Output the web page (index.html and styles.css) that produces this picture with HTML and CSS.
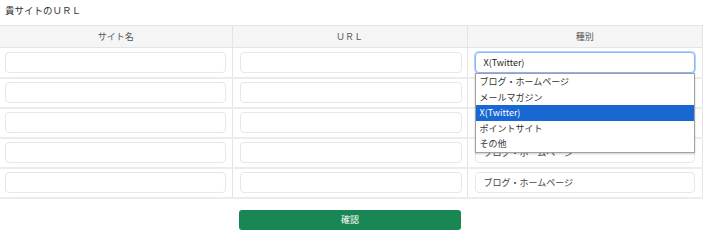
FILE: index.html
```html
<!DOCTYPE html>
<html lang="ja">
<head>
    <meta charset="UTF-8">
    <meta name="viewport" content="width=device-width, initial-scale=1.0">
    <title>貴サイトのＵＲＬ</title>
    <link rel="stylesheet" href="styles.css">
</head>
<body>
    <div class="container">
        <h2 class="title">貴サイトのＵＲＬ</h2>

        <table class="url-table">
            <colgroup>
                <col class="col-name">
                <col class="col-url">
                <col class="col-type">
            </colgroup>
            <thead>
                <tr>
                    <th>サイト名</th>
                    <th>ＵＲＬ</th>
                    <th>種別</th>
                </tr>
            </thead>
            <tbody>
                <tr>
                    <td><input type="text" class="field"></td>
                    <td><input type="text" class="field"></td>
                    <td class="type-cell">
                        <div class="field select focus">X(Twitter)</div>
                        <ul class="dropdown">
                            <li>ブログ・ホームページ</li>
                            <li>メールマガジン</li>
                            <li class="active">X(Twitter)</li>
                            <li>ポイントサイト</li>
                            <li>その他</li>
                        </ul>
                    </td>
                </tr>
                <tr>
                    <td><input type="text" class="field"></td>
                    <td><input type="text" class="field"></td>
                    <td><div class="field select">ブログ・ホームページ</div></td>
                </tr>
                <tr>
                    <td><input type="text" class="field"></td>
                    <td><input type="text" class="field"></td>
                    <td><div class="field select">ブログ・ホームページ</div></td>
                </tr>
                <tr>
                    <td><input type="text" class="field"></td>
                    <td><input type="text" class="field"></td>
                    <td><div class="field select">ブログ・ホームページ</div></td>
                </tr>
                <tr>
                    <td><input type="text" class="field"></td>
                    <td><input type="text" class="field"></td>
                    <td><div class="field select">ブログ・ホームページ</div></td>
                </tr>
            </tbody>
        </table>

        <div class="actions">
            <button type="button" class="btn">確認</button>
        </div>
    </div>
</body>
</html>
```

FILE: styles.css
```css
body {
    margin: 0;
    font-family: "Noto Sans CJK JP", "Noto Sans", sans-serif;
    font-size: 9px;
    color: #333;
    background: white;
}

.container {
    width: 703px;
}

.title {
    margin: 0;
    padding: 3px 5px 0;
    height: 25px;
    font-size: 9.5px;
    font-weight: normal;
    color: #333;
    box-sizing: border-box;
}

.url-table {
    width: 703px;
    border-collapse: collapse;
    table-layout: fixed;
    border-top: 1px solid #e2e4e7;
    border-bottom: 1px solid #e2e4e7;
}

.col-name {
    width: 232px;
}

.col-url {
    width: 235px;
}

.url-table th,
.url-table td {
    border-left: 1px solid #e2e4e7;
    border-right: 1px solid #e2e4e7;
}

.url-table th:first-child,
.url-table td:first-child {
    border-left: none;
}

.url-table th {
    background: #f5f5f5;
    color: #555;
    font-weight: normal;
    height: 21px;
    padding: 0;
    text-align: center;
    border-bottom: 1px solid #e2e4e7;
}

.url-table td {
    height: 30px;
    padding: 0 6px 0 5px;
    box-sizing: border-box;
    border-bottom: 2px solid #ececec;
}

.url-table td + td {
    padding: 0 5px 0 7px;
}

.url-table td + td + td {
    padding: 0 7px 0 7px;
}

.field {
    display: block;
    width: 100%;
    height: 21px;
    border: 1px solid #e5e7ea;
    border-radius: 4px;
    box-sizing: border-box;
    font-family: inherit;
    font-size: 9px;
    padding: 0 8px;
    background: white;
}

.select {
    line-height: 19px;
    color: #444;
}

.select.focus {
    border-color: #86b7fe;
    box-shadow: 0 0 0 1px #b7d3fd;
    color: #222;
}

.type-cell {
    position: relative;
}

.dropdown {
    position: absolute;
    left: 7px;
    right: 7px;
    top: 25px;
    margin: 0;
    padding: 0;
    list-style: none;
    background: white;
    border: 1px solid #a0a0a0;
    box-shadow: 0 1px 2px rgba(0,0,0,0.2);
    z-index: 2;
}

.dropdown li {
    height: 15.6px;
    line-height: 15.6px;
    padding-left: 4px;
    color: #333;
}

.dropdown li.active {
    background: #1967d2;
    color: white;
}

.actions {
    padding: 11px 3px 0 0;
    text-align: center;
}

.btn {
    width: 222px;
    height: 20px;
    background: #198754;
    color: white;
    border: none;
    border-radius: 3px;
    font-family: inherit;
    font-size: 9px;
    cursor: pointer;
}
```
